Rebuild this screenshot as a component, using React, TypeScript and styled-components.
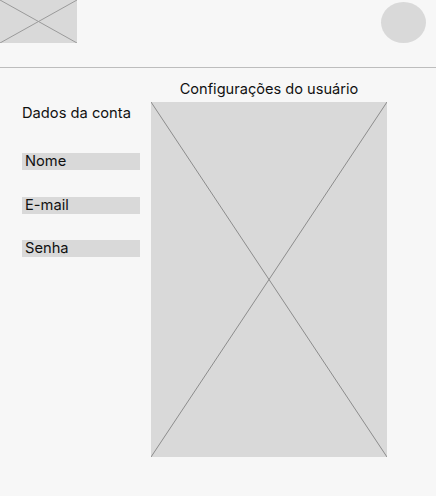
import styled, { createGlobalStyle } from "styled-components";

const GlobalStyle = createGlobalStyle`
  html, body {
    margin: 0;
    padding: 0;
    background: #f7f7f7;
  }
  body {
    font-family: Inter, "Noto Sans", "Liberation Sans", sans-serif;
    color: #111;
  }
`;

const Placeholder = ({ stroke = "#8c8c8c" }: { stroke?: string }) => (
  <StyledCross viewBox="0 0 100 100" preserveAspectRatio="none">
    <line x1="0" y1="0" x2="100" y2="100" stroke={stroke} strokeWidth="1" vectorEffect="non-scaling-stroke" />
    <line x1="100" y1="0" x2="0" y2="100" stroke={stroke} strokeWidth="1" vectorEffect="non-scaling-stroke" />
  </StyledCross>
);

const App = () => {
  return (
    <>
      <GlobalStyle />
      <StyledPage>
        <StyledHeader>
          <StyledLogo>
            <Placeholder stroke="#9a9a9a" />
          </StyledLogo>
          <StyledAvatar />
        </StyledHeader>

        <StyledMain>
          <StyledAccount>
            <StyledSectionTitle>Dados da conta</StyledSectionTitle>
            <StyledFieldList>
              <StyledField>Nome</StyledField>
              <StyledField>E-mail</StyledField>
              <StyledField>Senha</StyledField>
            </StyledFieldList>
          </StyledAccount>

          <StyledSettings>
            <StyledSettingsTitle>Configurações do usuário</StyledSettingsTitle>
            <StyledPreview>
              <Placeholder />
            </StyledPreview>
          </StyledSettings>
        </StyledMain>
      </StyledPage>
    </>
  );
};

export default App;

const StyledPage = styled.div`
  width: 436px;
  min-height: 496px;
  background: #f7f7f7;
`;

const StyledHeader = styled.header`
  display: flex;
  justify-content: space-between;
  align-items: flex-start;
  height: 67px;
  border-bottom: 1px solid #bdbdbd;
`;

const StyledLogo = styled.div`
  width: 77px;
  height: 43px;
  background: #d9d9d9;
`;

const StyledAvatar = styled.div`
  width: 45px;
  height: 41px;
  margin: 2px 10px 0 0;
  border-radius: 50%;
  background: #d9d9d9;
`;

const StyledCross = styled.svg`
  display: block;
  width: 100%;
  height: 100%;
`;

const StyledMain = styled.main`
  display: flex;
  align-items: flex-start;
  padding: 12px 0 0 22px;
`;

const StyledAccount = styled.section`
  display: flex;
  flex-direction: column;
  width: 118px;
  padding-top: 24px;
`;

const StyledSectionTitle = styled.h2`
  margin: 0;
  font-size: 14.7px;
  font-weight: 400;
  line-height: 18px;
`;

const StyledFieldList = styled.div`
  display: flex;
  flex-direction: column;
  gap: 26.5px;
  margin-top: 31px;
`;

const StyledField = styled.div`
  height: 17px;
  padding-left: 3px;
  background: #d9d9d9;
  font-size: 14.7px;
  line-height: 17px;
`;

const StyledSettings = styled.section`
  display: flex;
  flex-direction: column;
  align-items: center;
  width: 236px;
  margin-left: 11px;
`;

const StyledSettingsTitle = styled.h1`
  margin: 0 0 4px;
  font-size: 14.6px;
  font-weight: 400;
  line-height: 18px;
  white-space: nowrap;
`;

const StyledPreview = styled.div`
  width: 236px;
  height: 355px;
  background: #d9d9d9;
`;
